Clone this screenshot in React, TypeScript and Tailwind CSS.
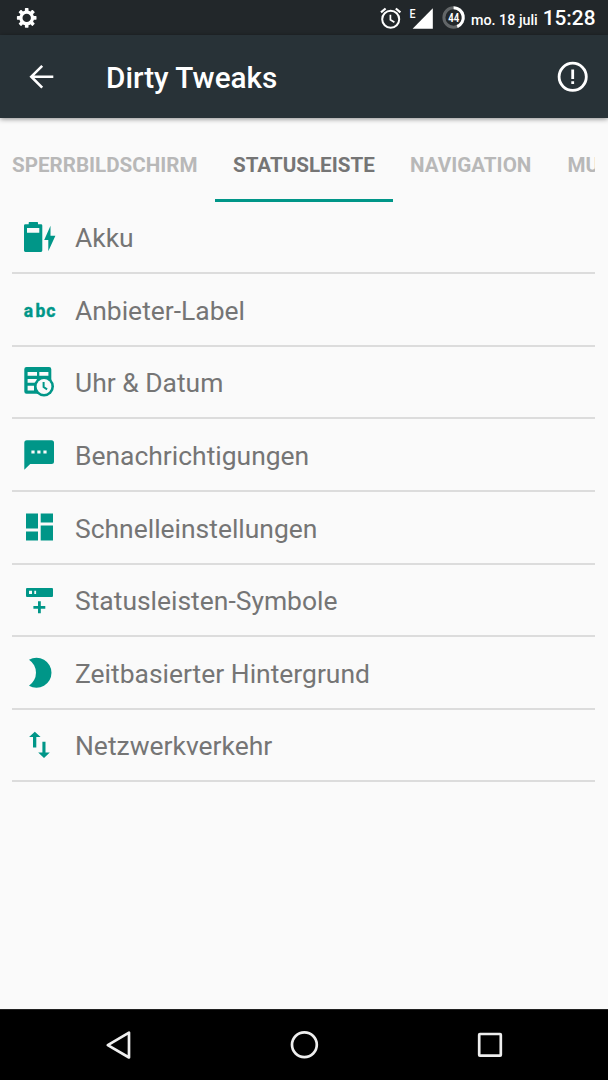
import type { ReactNode } from 'react';

const Icon = ({ children }: { children: ReactNode }) => (
  <svg viewBox="0 0 40 40" className="h-10 w-10 shrink-0 fill-[#009688]">{children}</svg>
);

const BatteryIcon = () => (
  <Icon>
    <path fillRule="evenodd" d="M9.7 7.3V5.6q0-.6.6-.6h8q.7 0 .7.6v1.7h3q1.3 0 1.3 1.3v25q0 1.4-1.3 1.4H6.4Q5 35 5 33.6v-25q0-1.3 1.4-1.3zM8 11v4.8h12.3V11z" />
    <path d="M31.5 8.7 25.2 23h4.1v11.3l7.1-15.6h-4.9z" />
  </Icon>
);

const AbcIcon = () => (
  <Icon>
    <text x="4.8 16.4 27.2" y="27" className="stroke-[#009688] stroke-[0.4] font-['Roboto',sans-serif] text-[17.5px] font-bold">abc</text>
  </Icon>
);

const TableClockIcon = () => (
  <Icon>
    <path fillRule="evenodd" d="M7.5 5h22.6q2.2 0 2.2 2.2v24.6H7.5q-2.2 0-2.2-2.2V7.2Q5.3 5 7.5 5zM8.6 10v3.8H18V10zm11.7 0v3.8h9.1V10zM8.6 16.9v3.9H18v-3.9zm0 6.9v4.7H15v-4.7z" />
    <path className="fill-[#fafafa]" d="M20.3 16.9h9.1v3.9h-9.1zM27 30h7v5h-7z" />
    <circle cx="25" cy="24.5" r="10" />
    <circle cx="25" cy="24.5" r="7.4" className="fill-[#fafafa]" />
    <path d="M24.6 20v5l3.5 2.3" className="fill-none stroke-[#009688] stroke-2" />
  </Icon>
);

const MessageIcon = () => (
  <Icon>
    <path fillRule="evenodd" d="M7.8 5.2h24.7Q35 5.2 35 7.7v18.7q0 2.5-2.5 2.5H11.2l-5.9 5.8v-27q0-2.5 2.5-2.5zM12.4 15.4v3.2h3.2v-3.2zm5.9 0v3.2h3.2v-3.2zm6.1 0v3.2h3.2v-3.2z" />
  </Icon>
);

const DashboardIcon = () => (
  <Icon>
    <path d="M7 6.6h12v15H7zM7 24.6h12v9H7zM21.7 6.6H34v9H21.7zM21.7 18.6H34v15H21.7z" />
  </Icon>
);

const StatusPlusIcon = () => (
  <Icon>
    <path fillRule="evenodd" d="M8 8h25q1 0 1 1v7q0 1-1 1H8q-1 0-1-1V9q0-1 1-1zm2 2.8V14h3v-3.2zm5.3 0V14h1.8v-3.2z" />
    <path d="M19 21.3h2.8v4.6h4.5v2.8h-4.5v4.5H19v-4.5h-4.6v-2.8H19z" />
  </Icon>
);

const MoonIcon = () => (
  <Icon>
    <path d="M10 6.7A15 15 0 1 1 10 32.7A15.6 15.6 0 0 0 10 6.7z" />
  </Icon>
);

const TrafficIcon = () => (
  <Icon>
    <path d="M15.8 6.8 21.6 12h-4.3v10.5H14V12h-3.9zM23.4 16.8h3.1v10.6h4.3L25 33l-5.8-5.6h4.2z" />
  </Icon>
);

const rows = [
  { label: 'Akku', icon: <BatteryIcon /> },
  { label: 'Anbieter-Label', icon: <AbcIcon /> },
  { label: 'Uhr & Datum', icon: <TableClockIcon /> },
  { label: 'Benachrichtigungen', icon: <MessageIcon /> },
  { label: 'Schnelleinstellungen', icon: <DashboardIcon /> },
  { label: 'Statusleisten-Symbole', icon: <StatusPlusIcon /> },
  { label: 'Zeitbasierter Hintergrund', icon: <MoonIcon /> },
  { label: 'Netzwerkverkehr', icon: <TrafficIcon /> },
];

const StatusBar = () => (
  <div className="flex h-[35px] items-center bg-[#22272a] pr-3 pl-4 text-white">
    <svg viewBox="0 0 22 22" className="h-[22px] w-[22px]">
      <circle cx="10.7" cy="10.9" r="5.8" className="fill-none stroke-white stroke-[3.2]" />
      {[0, 45, 90, 135, 180, 225, 270, 315].map((a) => (
        <rect key={a} x="8.9" y="1.1" width="3.6" height="3.6" rx=".6" className="fill-white" transform={`rotate(${a} 10.7 10.9)`} />
      ))}
    </svg>
    <svg viewBox="0 0 22 22" className="ml-[342px] h-[22px] w-[22px] fill-none stroke-white">
      <circle cx="10.7" cy="12.2" r="8.5" strokeWidth="2" />
      <path d="M10.4 7.7v5l4 2.5" strokeWidth="1.7" />
      <path d="m1 5.4 4.6-3.9M20.4 5.4l-4.6-3.9" strokeWidth="2.2" />
    </svg>
    <svg viewBox="0 0 24 22" className="ml-[7px] h-[22px] w-6">
      <text x="0.5" y="10.5" className="fill-white font-['Roboto',sans-serif] text-[12px] font-medium" textLength="6" lengthAdjust="spacingAndGlyphs">E</text>
      <path d="M23.8 1.3v20.5H3.6z" className="fill-white" />
    </svg>
    <svg viewBox="0 0 24 24" className="ml-[9px] h-6 w-6">
      <circle cx="11.6" cy="11.5" r="9.7" className="fill-none stroke-[#626668] stroke-[3]" />
      <path d="M11.6 1.8A9.7 9.7 0 0 1 15.2 20.5" className="fill-none stroke-white stroke-[3]" />
      <text x="6.2" y="15.5" className="fill-white font-['Roboto',sans-serif] text-[12px] font-bold" textLength="11" lengthAdjust="spacingAndGlyphs">44</text>
    </svg>
    <span className="mt-1.5 ml-[5px] text-[14.3px] font-medium whitespace-nowrap">mo. 18 juli</span>
    <span className="mt-[3px] ml-[5px] text-[20.8px] font-medium whitespace-nowrap">15:28</span>
  </div>
);

const Toolbar = () => (
  <header className="relative flex h-[83px] items-center bg-[#283237] pr-[19px] pl-[29px] text-white shadow-[0_1px_5px_rgba(0,0,0,0.45)]">
    <svg viewBox="0 0 26 26" className="h-[26px] w-[26px] fill-none stroke-white stroke-[2.6]">
      <path d="M24.3 12.7H2.5M13.2 1.8 2.3 12.7l10.9 10.9" />
    </svg>
    <h1 className="ml-[51px] grow pt-[3px] text-[29.7px] font-medium whitespace-nowrap">Dirty Tweaks</h1>
    <svg viewBox="0 0 32 32" className="h-8 w-8">
      <circle cx="15.7" cy="15.8" r="13.6" className="fill-none stroke-white stroke-[2.8]" />
      <path d="M14.3 8.5h2.8V18h-2.8zM14.3 20.3h2.8v2.8h-2.8z" className="fill-white" />
    </svg>
  </header>
);

const Tabs = () => (
  <nav className="flex h-[83.7px] overflow-hidden text-[20.6px] font-bold whitespace-nowrap text-[#b8b8b8]">
    <div className="flex w-[203px] shrink-0 items-center pt-[12px]"><span>SPERRBILDSCHIRM</span></div>
    <div className="flex w-[178px] shrink-0 items-center border-b-3 border-[#009688] pt-[15px] pl-[18px] text-[#757575]"><span>STATUSLEISTE</span></div>
    <div className="flex w-[157px] shrink-0 items-center pt-[12px] pl-[17px]"><span>NAVIGATION</span></div>
    <div className="flex shrink-0 items-center pt-[12px] pl-[17.5px]"><span>MULTITASKING</span></div>
  </nav>
);

const NavBar = () => (
  <footer className="flex h-[71px] items-center justify-between border-t border-[#222] bg-black pr-[103px] pl-[104px]">
    <svg viewBox="0 0 30 30" className="h-[30px] w-[30px] fill-none stroke-[#eee] stroke-[2.7]">
      <path d="M25 2.7v24.8L3.8 15.1z" strokeLinejoin="round" />
    </svg>
    <svg viewBox="0 0 30 30" className="h-[30px] w-[30px] fill-none stroke-[#eee] stroke-[2.7]">
      <circle cx="14.4" cy="14.8" r="12.4" />
    </svg>
    <svg viewBox="0 0 30 30" className="h-[30px] w-[30px] fill-none stroke-[#eee] stroke-[2.7]">
      <rect x="4.2" y="4" width="21.6" height="21.6" rx=".7" />
    </svg>
  </footer>
);

export default function App() {
  return (
    <div className="flex h-[1080px] w-[608px] flex-col overflow-hidden bg-[#fafafa] font-['Roboto',sans-serif]">
      <StatusBar />
      <Toolbar />
      <main className="grow px-3 pr-[13px]">
        <Tabs />
        <ul>
          {rows.map((row) => (
            <li key={row.label} className="flex h-[72.6px] items-center border-b-2 border-[#dcdcdc] pl-[7px]">
              {row.icon}
              <span className="ml-4 pt-[2px] text-[26.45px] whitespace-nowrap text-[#757575]">{row.label}</span>
            </li>
          ))}
        </ul>
      </main>
      <NavBar />
    </div>
  );
}
